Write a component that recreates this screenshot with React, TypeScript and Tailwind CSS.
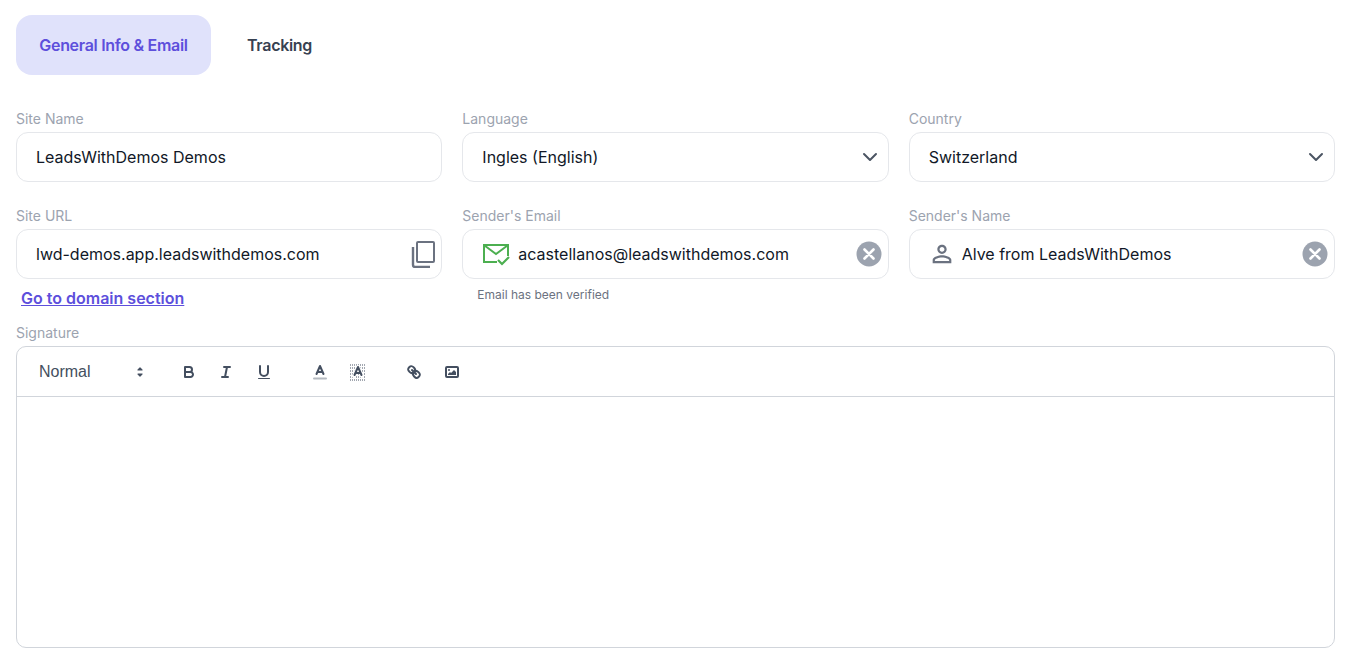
import type { ReactNode } from "react";
import { ChevronDown } from "lucide-react";

const FONT = "font-['Inter','Noto_Sans',sans-serif]";

function Field({ label, children }: { label: string; children: ReactNode }) {
  return (
    <div>
      <label className="mb-[3px] block h-5 text-sm leading-5 text-[#9ca3af]">{label}</label>
      {children}
    </div>
  );
}

function Box({ children }: { children: ReactNode }) {
  return (
    <div className="flex h-[50px] items-center rounded-xl border border-[#e5e7eb] bg-white pl-[19px] pr-[7px] text-base text-[#111827]">
      {children}
    </div>
  );
}

function ClearIcon() {
  return (
    <svg width="26" height="26" viewBox="0 0 26 26" className="ml-auto mr-[-1px]">
      <circle cx="13" cy="13" r="12.5" fill="#9ca3af" />
      <path d="M8.5 8.5l9 9M17.5 8.5l-9 9" stroke="#fff" strokeWidth="2.6" strokeLinecap="round" />
    </svg>
  );
}

function Select({ value }: { value: string }) {
  return (
    <Box>
      <span>{value}</span>
      <ChevronDown size={24} strokeWidth={2} className="ml-auto mr-[-1px] text-[#4b5563]" />
    </Box>
  );
}

function CopyIcon() {
  return (
    <svg width="24" height="27" viewBox="0 0 24 27" className="ml-auto mr-[-1px] text-[#6b7280]" fill="none" stroke="currentColor">
      <rect x="6" y="1" width="17" height="20" rx="1" strokeWidth="2" />
      <path d="M2 6v18a2 2 0 0 0 2 2h15" strokeWidth="2.4" />
    </svg>
  );
}

function MailCheckIcon() {
  return (
    <svg width="28" height="23" viewBox="0 0 28 23" fill="none" stroke="#4caf50" strokeWidth="2" className="mr-2">
      <path d="M15 19H2V2h24v11" />
      <path d="M2.5 2.5L14 11 25.5 2.5" />
      <path d="M16 17l4 4 7-7" strokeWidth="2.2" />
    </svg>
  );
}

function PersonIcon() {
  return (
    <svg width="28" height="28" viewBox="0 0 24 24" fill="#6b7280" className="mr-[6px] ml-[-1px]">
      <path d="M12 5.9c1.16 0 2.1.94 2.1 2.1s-.94 2.1-2.1 2.1S9.9 9.16 9.9 8s.94-2.1 2.1-2.1m0 9c2.97 0 6.1 1.46 6.1 2.1v1.1H5.9V17c0-.64 3.13-2.1 6.1-2.1M12 4C9.79 4 8 5.79 8 8s1.79 4 4 4 4-1.79 4-4-1.79-4-4-4zm0 9c-2.67 0-8 1.34-8 4v3h16v-3c0-2.66-5.33-4-8-4z" />
    </svg>
  );
}

// Editor toolbar icons, all on an 18x18 grid
function ToolIcon({ children }: { children: ReactNode }) {
  return (
    <button type="button" className="flex h-6 w-[37.5px] items-center justify-center">
      <svg width="18" height="18" viewBox="0 0 18 18" fill="none" stroke="#444f60" strokeWidth="2" strokeLinecap="round" strokeLinejoin="round">
        {children}
      </svg>
    </button>
  );
}

function Toolbar() {
  return (
    <div className="flex h-[50px] items-center border-b border-[#d1d5db] pl-[22px]">
      <div className="flex w-[131px] items-center justify-between pr-[21px] font-['Liberation_Sans',sans-serif] text-base text-[#444f60]">
        <span>Normal</span>
        <svg width="18" height="18" viewBox="0 0 18 18" fill="#444f60" stroke="#444f60" strokeWidth="1.2" strokeLinejoin="round">
          <polygon points="7 11 9 13 11 11" />
          <polygon points="7 7 9 5 11 7" />
        </svg>
      </div>
      <ToolIcon>
        <path d="M5,4H9.5A2.5,2.5,0,0,1,12,6.5v0A2.5,2.5,0,0,1,9.5,9H5V4Z" />
        <path d="M5,9h5.5A2.5,2.5,0,0,1,13,11.5v0A2.5,2.5,0,0,1,10.5,14H5V9Z" />
      </ToolIcon>
      <ToolIcon>
        <path d="M7 4h6M5 14h6M8 14l2-10" />
      </ToolIcon>
      <ToolIcon>
        <path d="M5,3V9a4,4,0,0,0,4,4H9a4,4,0,0,0,4-4V3" />
        <rect x="3" y="15" width="12" height="1" rx=".5" fill="#444f60" stroke="none" />
      </ToolIcon>
      <div className="ml-[19px] flex">
        <ToolIcon>
          <path d="M3 15.5h12" stroke="#b4b9c0" />
          <path d="M5.5 11L9 3l3.5 8M11.63 9H6.38" />
        </ToolIcon>
        <ToolIcon>
          <path d="M1 2h16M1 5h16M1 8h16M1 11h16M1 14h16M1 17h16" stroke="#444f60" strokeWidth="1" strokeDasharray="1 1" strokeLinecap="butt" />
          <path d="M5 13L9 4l4 9" stroke="#fff" strokeWidth="4" />
          <path d="M5.5 12L9 4l3.5 8M11.63 10H6.38" />
        </ToolIcon>
      </div>
      <div className="ml-[19px] flex">
        <ToolIcon>
          <path d="M7 7l4 4" />
          <path d="M8.9,4.577a3.476,3.476,0,0,1,.36,4.679A3.476,3.476,0,0,1,4.577,8.9C3.185,7.5,2.035,6.4,4.217,4.217S7.5,3.185,8.9,4.577Z" />
          <path d="M13.423,9.1a3.476,3.476,0,0,0-4.679-.36,3.476,3.476,0,0,0,.36,4.679c1.392,1.392,2.5,2.542,4.679.36S14.815,10.5,13.423,9.1Z" />
        </ToolIcon>
        <ToolIcon>
          <rect x="3" y="4" width="12" height="10" rx="1" />
          <circle cx="6" cy="7" r="1" fill="#444f60" stroke="none" />
          <polygon points="5 12 5 11 7 9 8 10 11 7 13 9 13 12" fill="#444f60" stroke="none" />
        </ToolIcon>
      </div>
    </div>
  );
}

export default function App() {
  return (
    <div className={`${FONT} min-h-[667px] bg-white pl-4 pr-[31px] pt-[15px]`}>
      <div className="flex items-center">
        <button type="button" className="h-[60px] w-[195px] rounded-2xl bg-[#e0e2fb] text-base font-semibold tracking-[-0.3px] text-[#5d4fdc]">
          General Info &amp; Email
        </button>
        <button type="button" className="ml-9 text-base font-semibold tracking-[-0.3px] text-[#374151]">
          Tracking
        </button>
      </div>

      <div className="mt-[34px] grid grid-cols-3 gap-x-5 gap-y-6">
        <Field label="Site Name">
          <Box>LeadsWithDemos Demos</Box>
        </Field>
        <Field label="Language">
          <Select value="Ingles (English)" />
        </Field>
        <Field label="Country">
          <Select value="Switzerland" />
        </Field>

        <Field label="Site URL">
          <Box>
            <span>lwd-demos.app.leadswithdemos.com</span>
            <CopyIcon />
          </Box>
          <a href="#" className="mt-[7px] ml-[5px] block text-base font-semibold leading-[24px] text-[#5d4fdc] underline">
            Go to domain section
          </a>
        </Field>
        <Field label="Sender's Email">
          <Box>
            <MailCheckIcon />
            <span>acastellanos@leadswithdemos.com</span>
            <ClearIcon />
          </Box>
          <p className="mt-[8px] ml-[15px] text-xs leading-4 text-[#6b7280]">Email has been verified</p>
        </Field>
        <Field label="Sender's Name">
          <Box>
            <PersonIcon />
            <span>Alve from LeadsWithDemos</span>
            <ClearIcon />
          </Box>
        </Field>
      </div>

      <div className="mt-[13px]">
        <label className="mb-[3px] block h-5 text-sm leading-5 text-[#9ca3af]">Signature</label>
        <div className="h-[302px] rounded-[10px] border border-[#d1d5db]">
          <Toolbar />
        </div>
      </div>
    </div>
  );
}
